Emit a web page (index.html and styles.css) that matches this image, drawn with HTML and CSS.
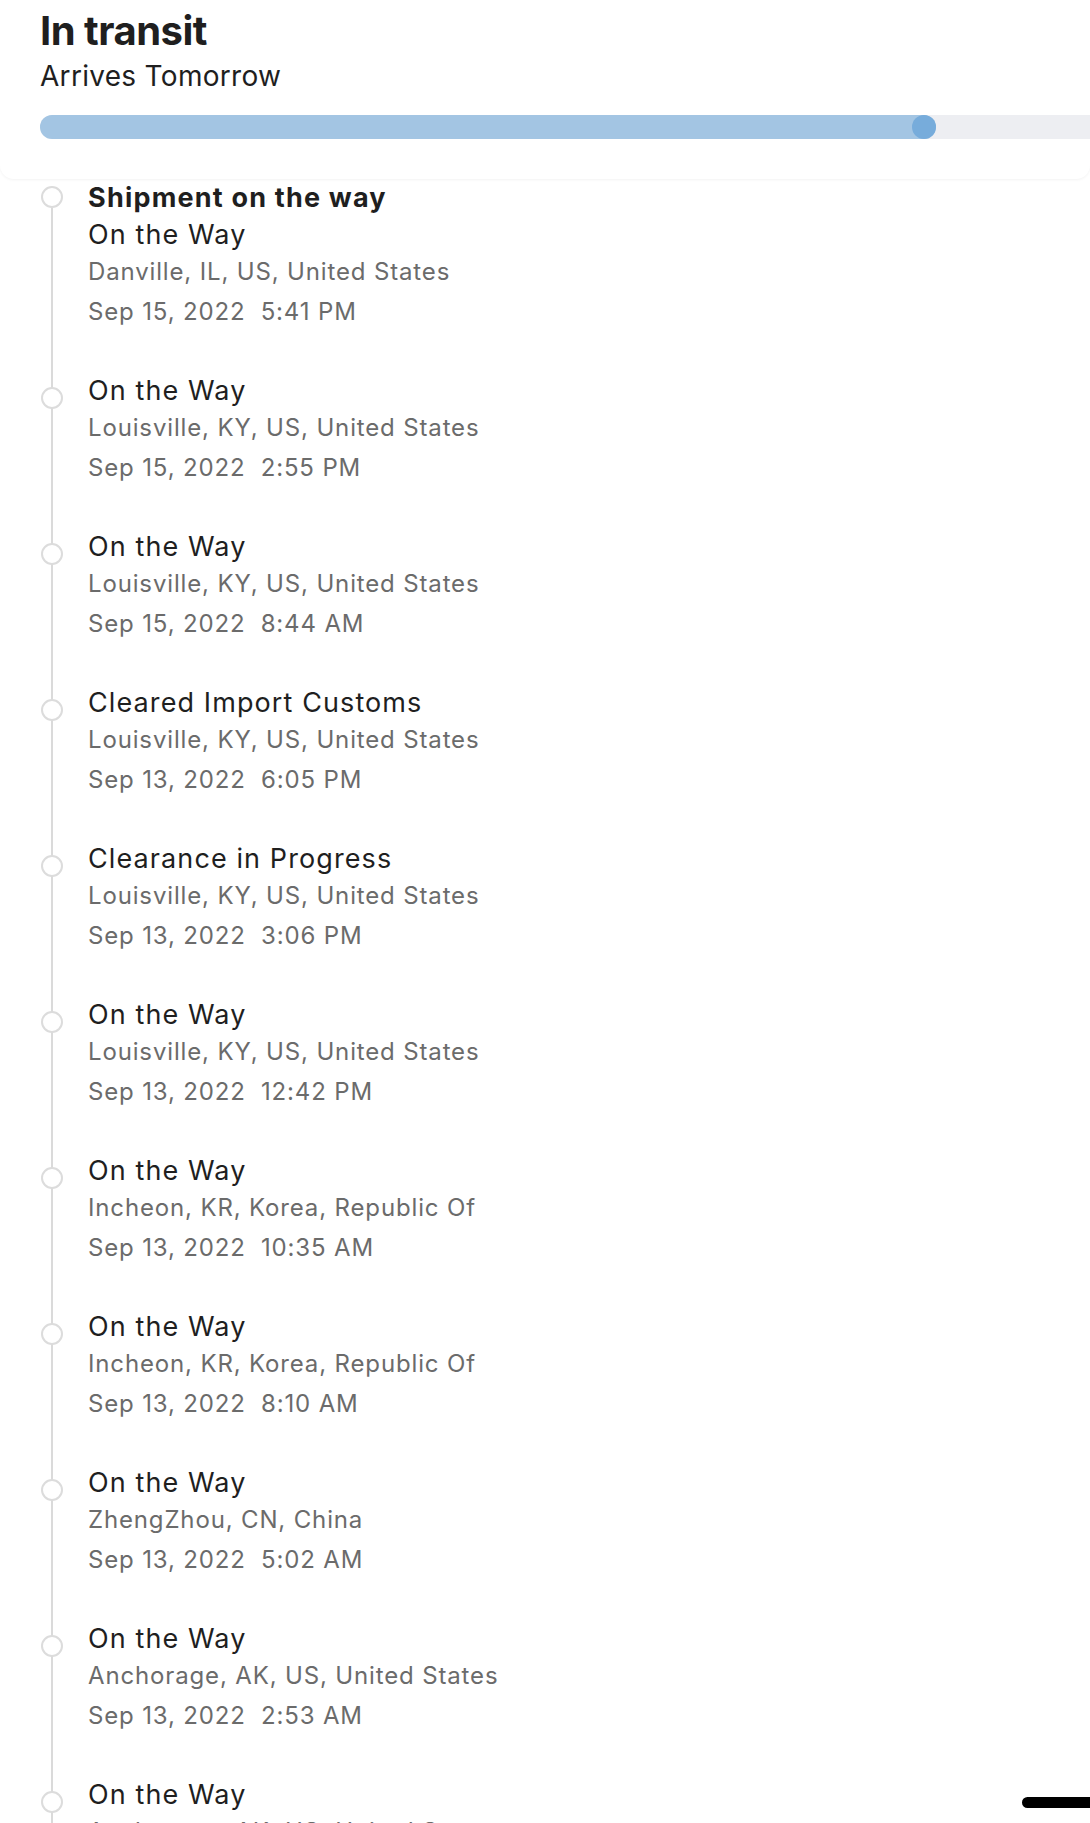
FILE: index.html
```html
<!DOCTYPE html>
<html lang="en">
<head>
  <meta charset="UTF-8" />
  <meta name="viewport" content="width=device-width, initial-scale=1.0"/>
  <title>Tracking</title>
  <link rel="stylesheet" href="styles.css">
</head>
<body>
  <header class="status-card">
    <h1 class="status-title">In transit</h1>
    <p class="status-eta">Arrives Tomorrow</p>
    <div class="progress-track">
      <div class="progress-fill" style="width: 896px;">
        <span class="progress-knob"></span>
      </div>
    </div>
  </header>

  <ul class="timeline">
    <li class="event event-first">
      <span class="dot"></span>
      <div class="event-body">
        <p class="event-heading">Shipment on the way</p>
        <p class="event-status">On the Way</p>
        <p class="event-place">Danville, IL, US, United States</p>
        <p class="event-time">Sep 15, 2022&nbsp; 5:41 PM</p>
      </div>
    </li>
    <li class="event">
      <span class="dot"></span>
      <div class="event-body">
        <p class="event-status">On the Way</p>
        <p class="event-place">Louisville, KY, US, United States</p>
        <p class="event-time">Sep 15, 2022&nbsp; 2:55 PM</p>
      </div>
    </li>
    <li class="event">
      <span class="dot"></span>
      <div class="event-body">
        <p class="event-status">On the Way</p>
        <p class="event-place">Louisville, KY, US, United States</p>
        <p class="event-time">Sep 15, 2022&nbsp; 8:44 AM</p>
      </div>
    </li>
    <li class="event">
      <span class="dot"></span>
      <div class="event-body">
        <p class="event-status">Cleared Import Customs</p>
        <p class="event-place">Louisville, KY, US, United States</p>
        <p class="event-time">Sep 13, 2022&nbsp; 6:05 PM</p>
      </div>
    </li>
    <li class="event">
      <span class="dot"></span>
      <div class="event-body">
        <p class="event-status">Clearance in Progress</p>
        <p class="event-place">Louisville, KY, US, United States</p>
        <p class="event-time">Sep 13, 2022&nbsp; 3:06 PM</p>
      </div>
    </li>
    <li class="event">
      <span class="dot"></span>
      <div class="event-body">
        <p class="event-status">On the Way</p>
        <p class="event-place">Louisville, KY, US, United States</p>
        <p class="event-time">Sep 13, 2022&nbsp; 12:42 PM</p>
      </div>
    </li>
    <li class="event">
      <span class="dot"></span>
      <div class="event-body">
        <p class="event-status">On the Way</p>
        <p class="event-place">Incheon, KR, Korea, Republic Of</p>
        <p class="event-time">Sep 13, 2022&nbsp; 10:35 AM</p>
      </div>
    </li>
    <li class="event">
      <span class="dot"></span>
      <div class="event-body">
        <p class="event-status">On the Way</p>
        <p class="event-place">Incheon, KR, Korea, Republic Of</p>
        <p class="event-time">Sep 13, 2022&nbsp; 8:10 AM</p>
      </div>
    </li>
    <li class="event">
      <span class="dot"></span>
      <div class="event-body">
        <p class="event-status">On the Way</p>
        <p class="event-place">ZhengZhou, CN, China</p>
        <p class="event-time">Sep 13, 2022&nbsp; 5:02 AM</p>
      </div>
    </li>
    <li class="event">
      <span class="dot"></span>
      <div class="event-body">
        <p class="event-status">On the Way</p>
        <p class="event-place">Anchorage, AK, US, United States</p>
        <p class="event-time">Sep 13, 2022&nbsp; 2:53 AM</p>
      </div>
    </li>
    <li class="event">
      <span class="dot"></span>
      <div class="event-body">
        <p class="event-status">On the Way</p>
        <p class="event-place">Anchorage, AK, US, United States</p>
      </div>
    </li>
  </ul>

  <div class="home-indicator"></div>
</body>
</html>
```

FILE: styles.css
```css
body {
  margin: 0;
  background-color: #fff;
  font-family: 'Inter', 'Noto Sans', sans-serif;
  color: #1f1f1f;
  overflow: hidden;
}

p {
  margin: 0;
}

.status-card {
  height: 179px;
  box-sizing: border-box;
  padding-top: 7px;
  border-radius: 0 0 14px 14px;
  box-shadow: 0 1px 3px rgba(0,0,0,0.05);
}
.status-title {
  margin: 0 0 0 40px;
  font-size: 40px;
  line-height: 48px;
  font-weight: 700;
  letter-spacing: -0.5px;
}
.status-eta {
  margin-left: 40px;
  font-size: 28px;
  line-height: 42px;
  letter-spacing: 0.3px;
}
.progress-track {
  margin: 18px 0 0 40px;
  height: 24px;
  background-color: #EDEEF2;
  border-radius: 12px 0 0 12px;
}
.progress-fill {
  height: 100%;
  display: flex;
  justify-content: flex-end;
  background-color: #A3C5E3;
  border-radius: 12px;
}
.progress-knob {
  width: 24px;
  height: 24px;
  border-radius: 50%;
  background-color: #77ACDB;
}

.timeline {
  list-style: none;
  margin: 0;
  padding: 0;
  background: linear-gradient(#DADADA, #DADADA) no-repeat 51px 29px / 2px 100%;
}
.event {
  display: flex;
  padding-bottom: 42px;
}
.dot {
  flex: none;
  width: 22px;
  height: 22px;
  box-sizing: border-box;
  margin: 15px 25px 0 41px;
  border: 2px solid #DCDCDC;
  border-radius: 50%;
  background-color: #fff;
}
.event-first .dot {
  margin-top: 7px;
}
.event-body p {
  font-size: 24px;
  line-height: 37px;
  letter-spacing: 0.85px;
}
.event-body .event-heading {
  font-size: 27px;
  font-weight: 700;
  letter-spacing: 1.2px;
  color: #1f1f1f;
}
.event-body .event-status {
  font-size: 27px;
  letter-spacing: 1.1px;
  color: #1f1f1f;
}
.event-place,
.event-time {
  color: #6b6b6b;
}
.event-body .event-time {
  margin-top: 3px;
}

.home-indicator {
  position: fixed;
  left: 1022px;
  top: 1797px;
  width: 140px;
  height: 11px;
  border-radius: 6px;
  background-color: #000;
}
```
